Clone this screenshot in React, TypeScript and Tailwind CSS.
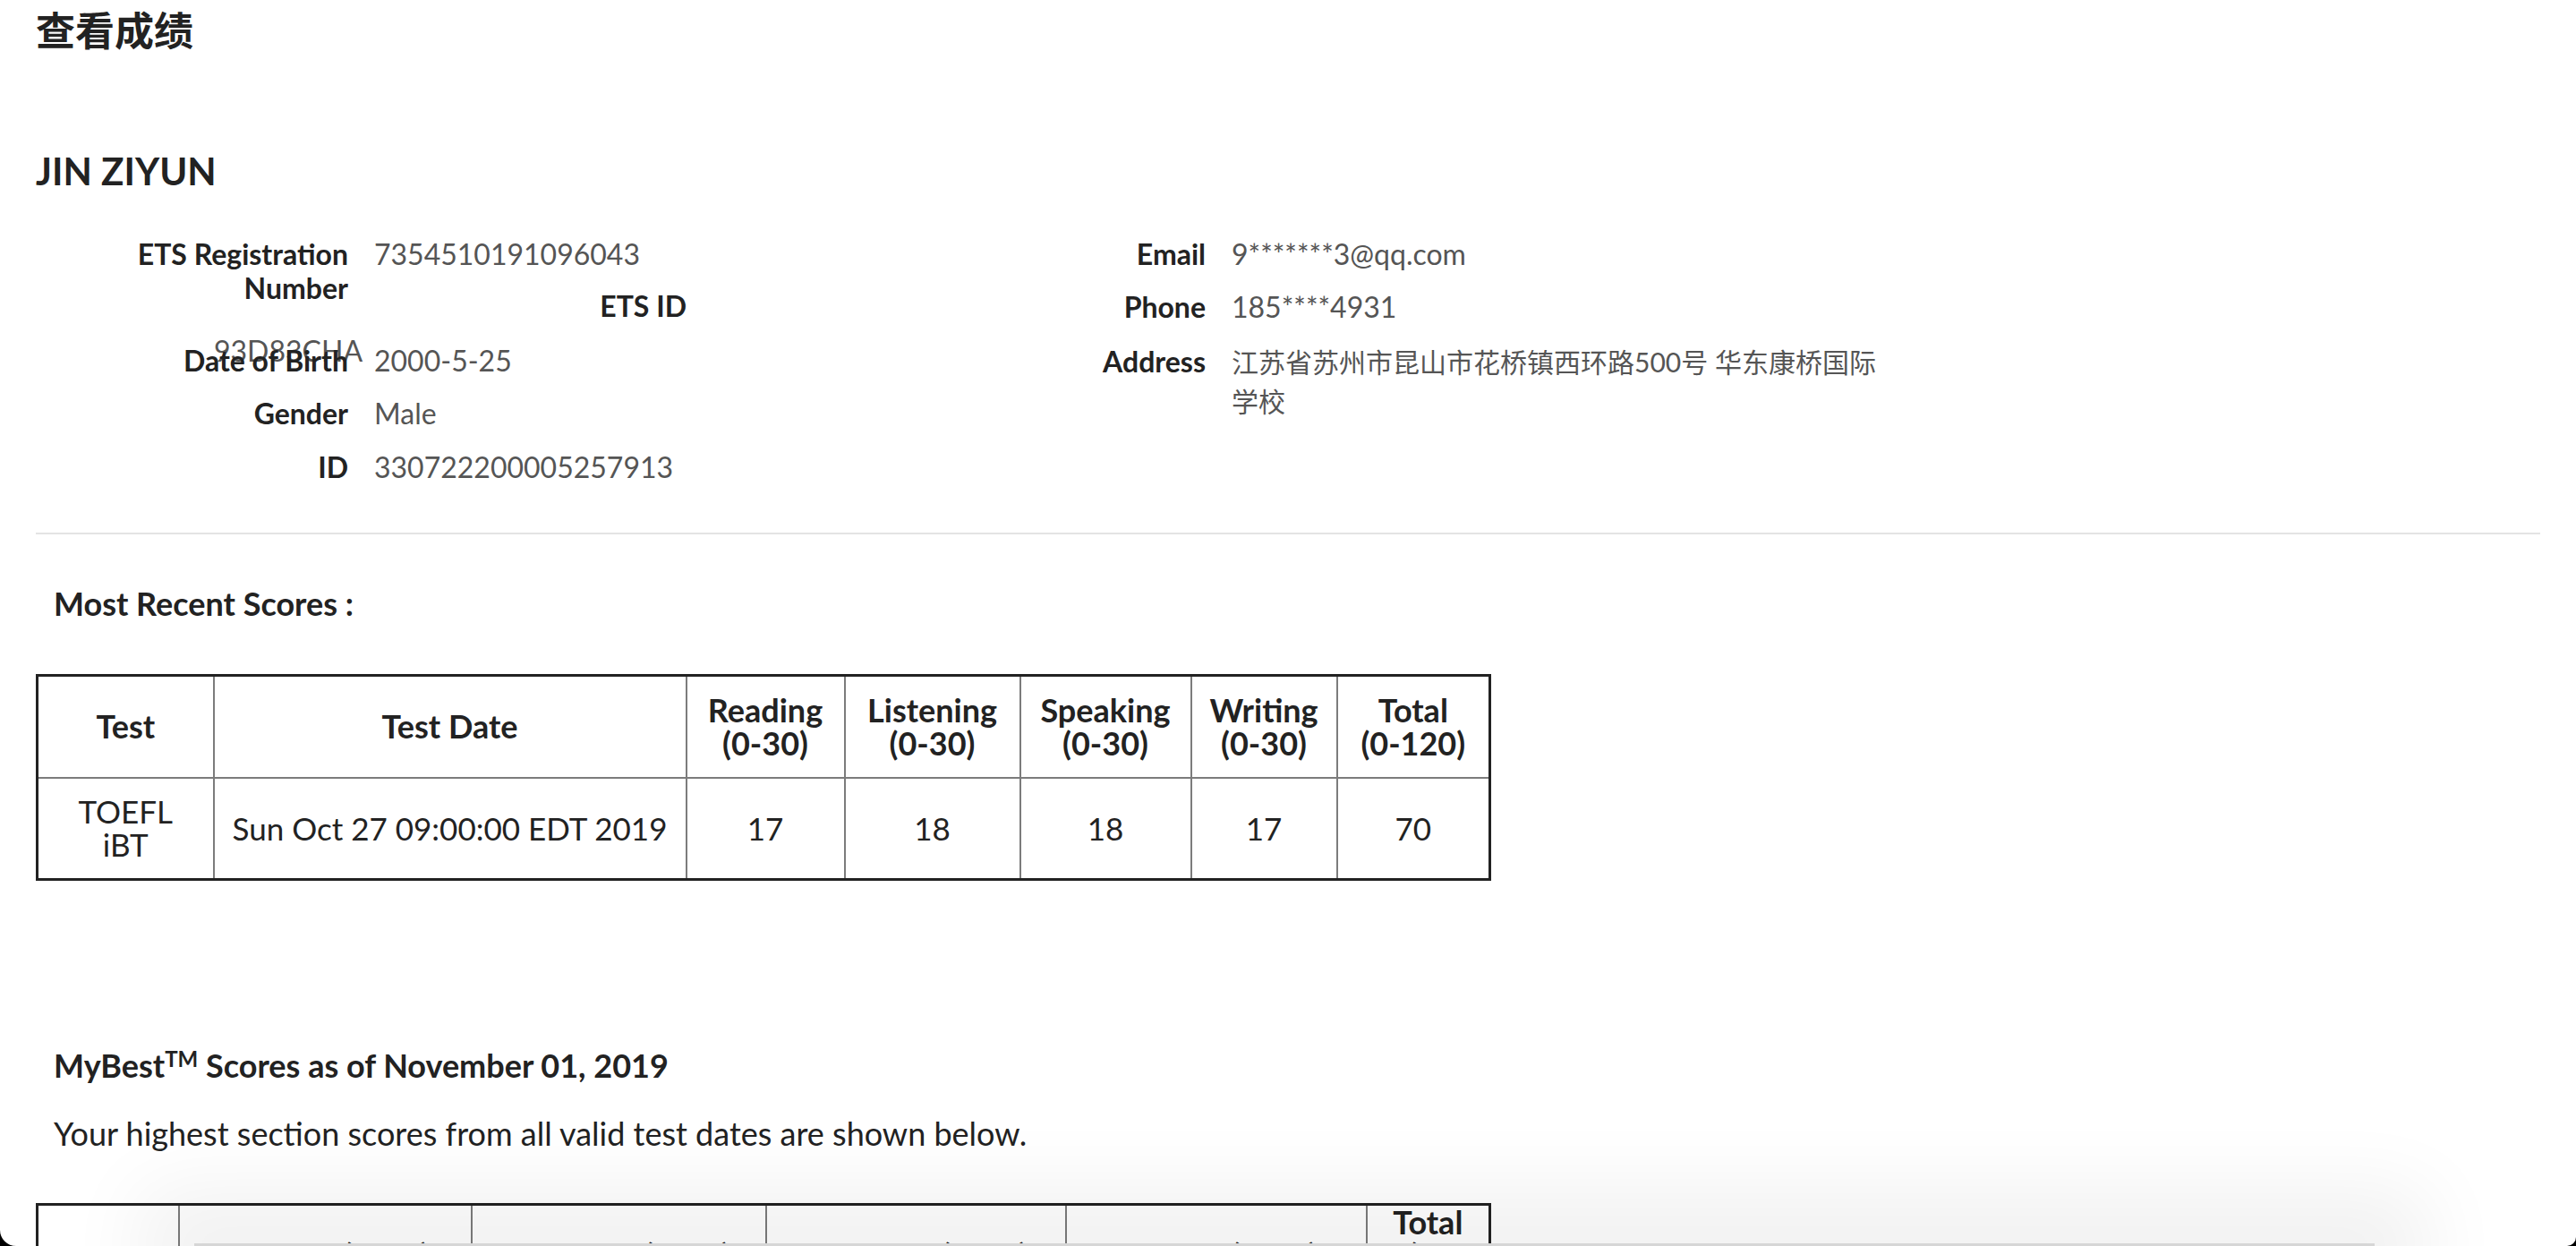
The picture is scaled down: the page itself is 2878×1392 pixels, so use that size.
const infoLabel = 'text-right text-[32px] font-bold text-[#222]'
const infoValue = 'text-[32px] text-[#555]'

type Row = { label: string; value: string }

const rightRows: Row[] = [
  { label: 'Email', value: '9*******3@qq.com' },
  { label: 'Phone', value: '185****4931' },
]

const recentHead = [
  ['Test'],
  ['Test Date'],
  ['Reading', '(0-30)'],
  ['Listening', '(0-30)'],
  ['Speaking', '(0-30)'],
  ['Writing', '(0-30)'],
  ['Total', '(0-120)'],
]

const recentWidths = ['w-[197px]', 'w-[528px]', 'w-[177px]', 'w-[196px]', 'w-[191px]', 'w-[163px]', 'w-[171px]']
const recentRow = ['TOEFL iBT', 'Sun Oct 27 09:00:00 EDT 2019', '17', '18', '18', '17', '70']

const bestHead = ['', 'Reading (0-30)', 'Listening (0-30)', 'Speaking (0-30)', 'Writing (0-30)', 'Total (0-120)']
const bestWidths = ['w-[158px]', 'w-[327px]', 'w-[329px]', 'w-[335px]', 'w-[336px]', 'w-[138px]']

function InfoRow({ label, value, className = '' }: Row & { className?: string }) {
  return (
    <div className={`grid grid-cols-[349px_1fr] gap-x-[29px] leading-[38px] ${className}`}>
      <div className={infoLabel}>{label}</div>
      <div className={infoValue}>{value}</div>
    </div>
  )
}

export default function App() {
  return (
    <div className="relative min-h-screen overflow-hidden bg-white text-[#222] font-[family-name:Lato,'Noto_Sans_CJK_SC',sans-serif]">
      <div className="px-[40px]">
        <h1 className="pt-[8px] text-[44px] leading-[48px] font-bold font-[family-name:'Noto_Sans_CJK_SC',sans-serif]">
          查看成绩
        </h1>
        <h2 className="mt-[114px] text-[42px] leading-[42px] font-bold">JIN ZIYUN</h2>

        <div className="mt-[53px] flex items-start">
          {/* left column */}
          <div className="w-[987px] flex flex-col">
            <div className="grid grid-cols-[349px_1fr] gap-x-[29px] leading-[38px]">
              <div className={infoLabel}>
                ETS Registration
                <br />
                Number
              </div>
              <div className={infoValue}>7354510191096043</div>
            </div>
            <div className="-mt-[18px] w-[727px] text-right text-[32px] leading-[38px] font-bold">ETS ID</div>
            <div className={`mt-[12px] pl-[199px] leading-[38px] ${infoValue}`}>93D83CHA</div>
            <InfoRow className="-mt-[27px]" label="Date of Birth" value="2000-5-25" />
            <InfoRow className="mt-[21px]" label="Gender" value="Male" />
            <InfoRow className="mt-[22px]" label="ID" value="330722200005257913" />
          </div>

          {/* right column */}
          <div className="flex flex-col gap-[21px]">
            {rightRows.map((r) => (
              <div key={r.label} className="grid grid-cols-[320px_1fr] gap-x-[29px] leading-[38px]">
                <div className={infoLabel}>{r.label}</div>
                <div className={infoValue}>{r.value}</div>
              </div>
            ))}
            <div className="-mt-[1px] grid grid-cols-[320px_1fr] gap-x-[29px] leading-[44px]">
              <div className={infoLabel}>Address</div>
              <div className="text-[30px] text-[#555]">
                江苏省苏州市昆山市花桥镇西环路500号 华东康桥国际
                <br />
                学校
              </div>
            </div>
          </div>
        </div>

        <div className="mt-[54px] h-[2px] bg-[#e4e4e4]" />

        <div className="mt-[57px] pl-[20px] text-[36px] leading-[40px] font-bold">Most Recent Scores :</div>

        <table className="mt-[59px] table-fixed border-collapse border-[3px] border-[#222]">
          <thead>
            <tr className="h-[114px]">
              {recentHead.map((h, i) => (
                <th
                  key={i}
                  className={`${recentWidths[i]} border-[2px] border-[#7c7c7c] text-center align-middle text-[36px] leading-[37px] font-bold`}
                >
                  {h.map((line) => (
                    <div key={line}>{line}</div>
                  ))}
                </th>
              ))}
            </tr>
          </thead>
          <tbody>
            <tr className="h-[114px]">
              {recentRow.map((c, i) => (
                <td key={i} className="border-[2px] border-[#7c7c7c] text-center align-middle text-[35px] leading-[37px]">
                  {i === 0 ? (
                    <>
                      TOEFL
                      <br />
                      iBT
                    </>
                  ) : (
                    c
                  )}
                </td>
              ))}
            </tr>
          </tbody>
        </table>

        <div className="mt-[186px] pl-[20px] text-[36px] leading-[40px] font-bold">
          MyBest<sup className="text-[24px]">TM</sup> Scores as of November 01, 2019
        </div>
        <div className="mt-[36px] pl-[20px] text-[36px] leading-[40px]">
          Your highest section scores from all valid test dates are shown below.
        </div>

        <table className="mt-[58px] table-fixed border-collapse border-[3px] border-[#222]">
          <thead>
            <tr className="h-[114px]">
              {bestHead.map((h, i) => (
                <th
                  key={i}
                  className={`${bestWidths[i]} border-[2px] border-[#7c7c7c] px-[12px] text-center align-middle text-[36px] leading-[37px] font-bold`}
                >
                  {h}
                </th>
              ))}
            </tr>
          </thead>
          <tbody>
            <tr className="h-[114px]">
              <td className="border-[2px] border-[#7c7c7c] text-center text-[35px]">Score</td>
              {['17', '18', '18', '17', '70'].map((s, i) => (
                <td key={i} className="border-[2px] border-[#7c7c7c] text-center text-[35px]">
                  {s}
                </td>
              ))}
            </tr>
          </tbody>
        </table>
      </div>

      {/* floating bar shadow at the bottom of the window */}
      <div className="pointer-events-none fixed bottom-0 left-[217px] right-[225px] h-[3px] bg-[#d6d6d6] shadow-[0_0_90px_60px_rgba(0,0,0,0.06)]" />
      <svg className="pointer-events-none fixed bottom-0 left-0" width="18" height="18" viewBox="0 0 18 18">
        <path d="M0 0 A18 18 0 0 0 18 18 H0 Z" fill="#000" />
      </svg>
      <svg className="pointer-events-none fixed bottom-0 right-0" width="10" height="10" viewBox="0 0 10 10">
        <path d="M10 0 A10 10 0 0 1 0 10 H10 Z" fill="#000" />
      </svg>
    </div>
  )
}
